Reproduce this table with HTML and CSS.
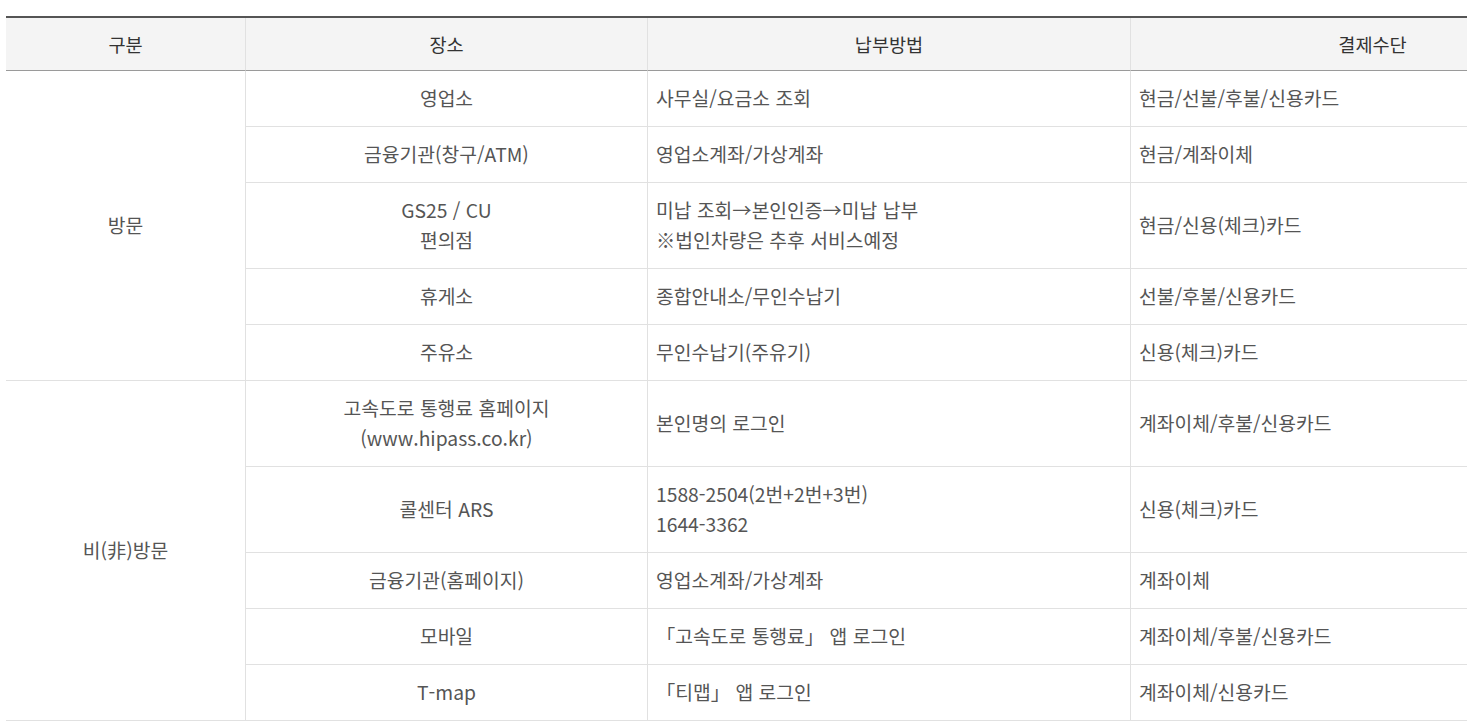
FILE: index.html
```html
<!DOCTYPE html>
<html lang="ko">
<head>
<meta charset="utf-8">
<title>통행료 납부방법</title>
<link rel="stylesheet" href="styles.css">
</head>
<body>
<table class="pay-table">
  <colgroup>
    <col class="c1"><col class="c2"><col class="c3"><col class="c4">
  </colgroup>
  <thead>
    <tr>
      <th class="sep">구분</th>
      <th class="sep">장소</th>
      <th class="sep">납부방법</th>
      <th>결제수단</th>
    </tr>
  </thead>
  <tbody>
    <tr>
      <td class="group sep" rowspan="5">방문</td>
      <td class="center sep">영업소</td>
      <td class="sep">사무실/요금소 조회</td>
      <td>현금/선불/후불/신용카드</td>
    </tr>
    <tr>
      <td class="center sep">금융기관(창구/ATM)</td>
      <td class="sep">영업소계좌/가상계좌</td>
      <td>현금/계좌이체</td>
    </tr>
    <tr>
      <td class="center sep">GS25 / CU<br>편의점</td>
      <td class="sep">미납 조회→본인인증→미납 납부<br>※법인차량은 추후 서비스예정</td>
      <td>현금/신용(체크)카드</td>
    </tr>
    <tr>
      <td class="center sep">휴게소</td>
      <td class="sep">종합안내소/무인수납기</td>
      <td>선불/후불/신용카드</td>
    </tr>
    <tr>
      <td class="center sep">주유소</td>
      <td class="sep">무인수납기(주유기)</td>
      <td>신용(체크)카드</td>
    </tr>
    <tr>
      <td class="group sep" rowspan="5">비(非)방문</td>
      <td class="center sep">고속도로 통행료 홈페이지<br>(www.hipass.co.kr)</td>
      <td class="sep">본인명의 로그인</td>
      <td>계좌이체/후불/신용카드</td>
    </tr>
    <tr>
      <td class="center sep">콜센터 ARS</td>
      <td class="sep">1588-2504(2번+2번+3번)<br>1644-3362</td>
      <td>신용(체크)카드</td>
    </tr>
    <tr>
      <td class="center sep">금융기관(홈페이지)</td>
      <td class="sep">영업소계좌/가상계좌</td>
      <td>계좌이체</td>
    </tr>
    <tr>
      <td class="center sep">모바일</td>
      <td class="sep">「고속도로 통행료」 앱 로그인</td>
      <td>계좌이체/후불/신용카드</td>
    </tr>
    <tr>
      <td class="center sep">T-map</td>
      <td class="sep">「티맵」 앱 로그인</td>
      <td>계좌이체/신용카드</td>
    </tr>
  </tbody>
</table>
</body>
</html>
```

FILE: styles.css
```css
html, body {
  margin: 0;
  padding: 0;
  background: #fff;
  overflow: hidden;
}

body {
  font-family: "Noto Sans CJK KR", "Noto Sans", sans-serif;
  font-size: 19.3px;
  color: #555;
}

.pay-table {
  margin: 16px 0 0 6px;
  width: 1608px;
  table-layout: fixed;
  border-collapse: separate;
  border-spacing: 0;
  border-top: 2px solid #555;
}

.c1 { width: 240px; }
.c2 { width: 402px; }
.c3 { width: 483px; }
.c4 { width: 483px; }

.pay-table th {
  background: #f4f4f4;
  color: #333;
  font-size: 18.6px;
  font-weight: 400;
  line-height: 30px;
  padding: 11px 8px;
  text-align: center;
  border-bottom: 1px solid #9a9a9a;
}

.pay-table td {
  line-height: 30px;
  padding: 12px 8px 13px 8px;
  text-align: left;
  vertical-align: middle;
  border-bottom: 1px solid #e1e1e1;
}

.pay-table th.sep,
.pay-table td.sep {
  border-right: 1px solid #e1e1e1;
}

.pay-table td.center,
.pay-table td.group {
  text-align: center;
}
```
